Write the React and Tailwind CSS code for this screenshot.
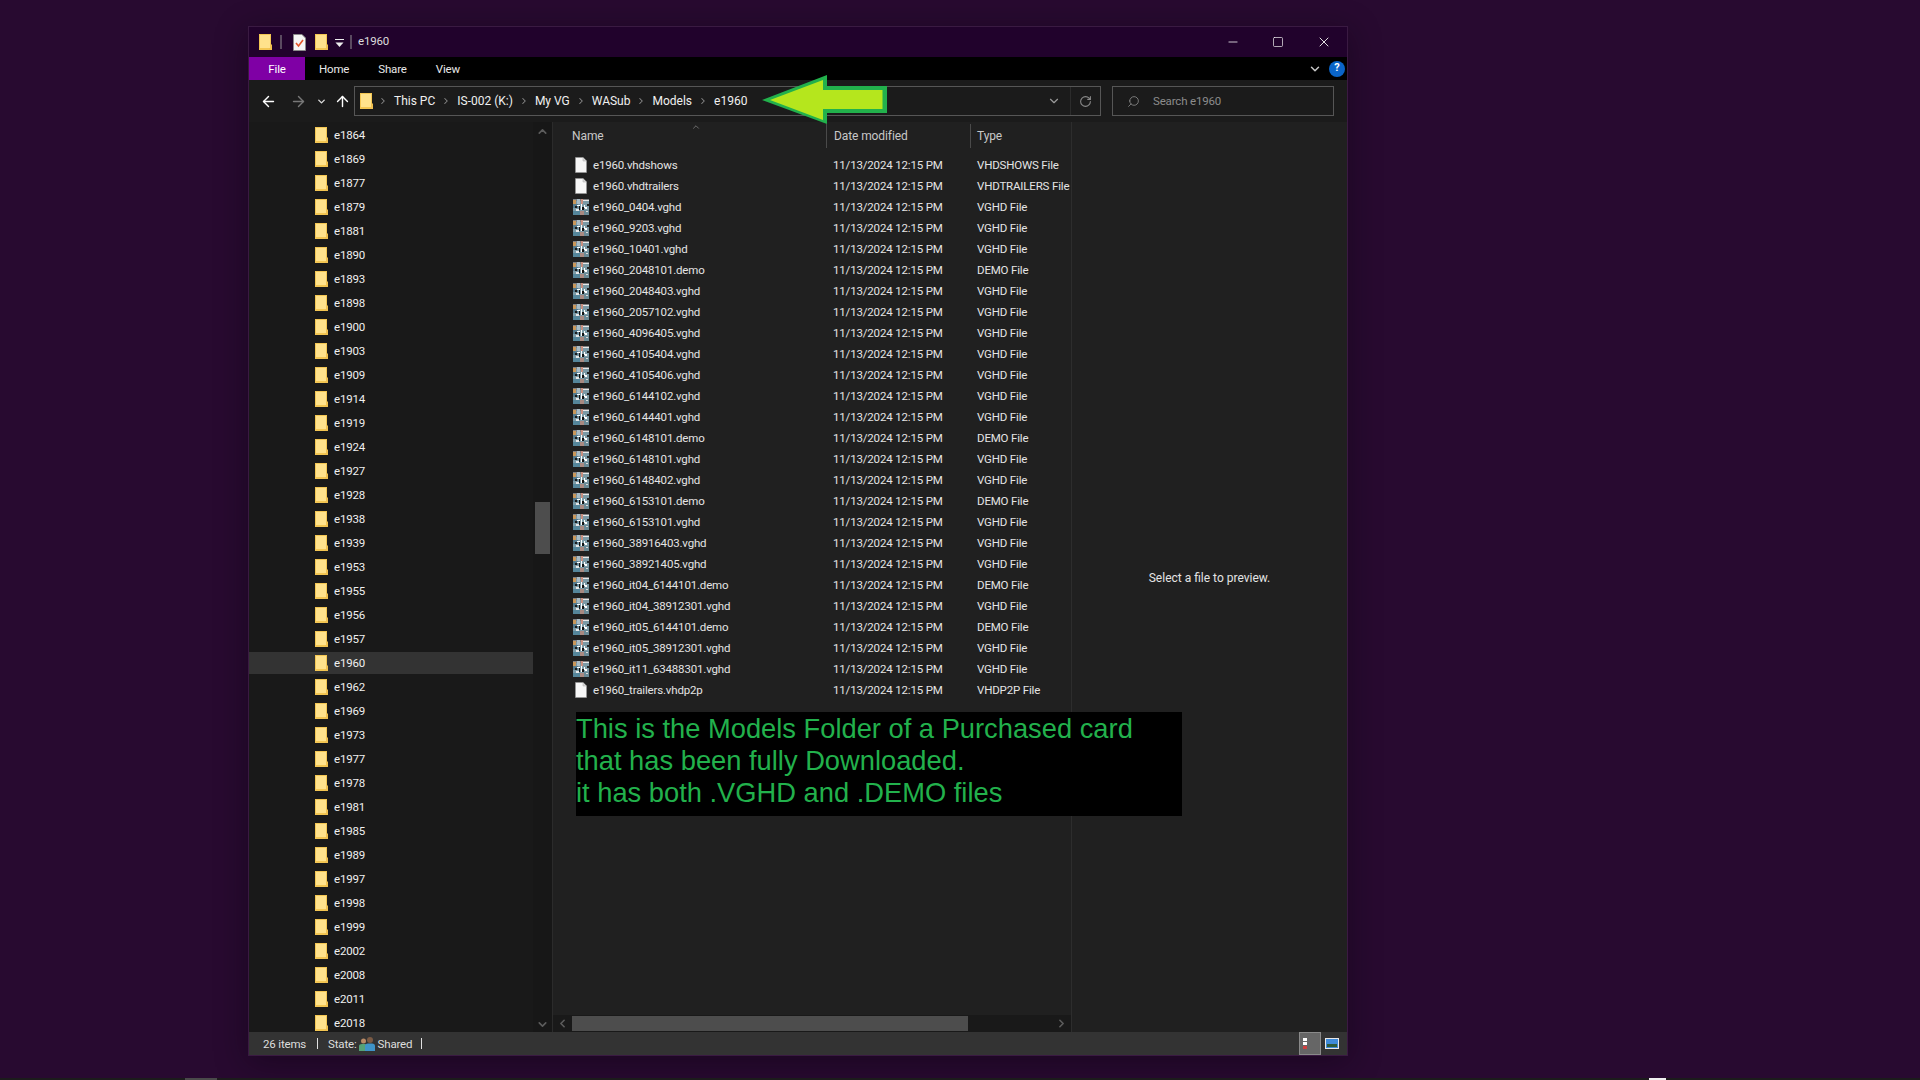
import React from "react";
import { ArrowLeft, ArrowRight, ArrowUp, ChevronDown, ChevronUp, ChevronLeft, ChevronRight, RotateCw, Search, Minus, Square, X } from "lucide-react";

const TREE = "e1864 e1869 e1877 e1879 e1881 e1890 e1893 e1898 e1900 e1903 e1909 e1914 e1919 e1924 e1927 e1928 e1938 e1939 e1953 e1955 e1956 e1957 e1960 e1962 e1969 e1973 e1977 e1978 e1981 e1985 e1989 e1997 e1998 e1999 e2002 e2008 e2011 e2018".split(" ");

const FILES = [
  ["e1960.vhdshows", "VHDSHOWS File", 0],
  ["e1960.vhdtrailers", "VHDTRAILERS File", 0],
  ["e1960_0404.vghd", "VGHD File", 1],
  ["e1960_9203.vghd", "VGHD File", 1],
  ["e1960_10401.vghd", "VGHD File", 1],
  ["e1960_2048101.demo", "DEMO File", 1],
  ["e1960_2048403.vghd", "VGHD File", 1],
  ["e1960_2057102.vghd", "VGHD File", 1],
  ["e1960_4096405.vghd", "VGHD File", 1],
  ["e1960_4105404.vghd", "VGHD File", 1],
  ["e1960_4105406.vghd", "VGHD File", 1],
  ["e1960_6144102.vghd", "VGHD File", 1],
  ["e1960_6144401.vghd", "VGHD File", 1],
  ["e1960_6148101.demo", "DEMO File", 1],
  ["e1960_6148101.vghd", "VGHD File", 1],
  ["e1960_6148402.vghd", "VGHD File", 1],
  ["e1960_6153101.demo", "DEMO File", 1],
  ["e1960_6153101.vghd", "VGHD File", 1],
  ["e1960_38916403.vghd", "VGHD File", 1],
  ["e1960_38921405.vghd", "VGHD File", 1],
  ["e1960_it04_6144101.demo", "DEMO File", 1],
  ["e1960_it04_38912301.vghd", "VGHD File", 1],
  ["e1960_it05_6144101.demo", "DEMO File", 1],
  ["e1960_it05_38912301.vghd", "VGHD File", 1],
  ["e1960_it11_63488301.vghd", "VGHD File", 1],
  ["e1960_trailers.vhdp2p", "VHDP2P File", 0],
];

function Folder({ className = "" }) {
  return (
    <svg width="13" height="16" viewBox="0 0 13 16" className={className}>
      <path d="M0 0H12V10L13 11V16H0Z" fill="#f3c653" />
      <path d="M1 1H11V11L11.5 12V14H1Z" fill="#ffe28c" />
      <path d="M11 11H13V16H10V14H11Z" fill="#f0c050" />
    </svg>
  );
}

function FileIcon() {
  return (
    <svg width="16" height="16" viewBox="0 0 16 16" className="shrink-0">
      <path d="M2.500 0.500H10L13.500 4V15.500H2.500Z" fill="#f7f7f7" stroke="#9a9a9a" strokeWidth="0.6" />
      <path d="M10 0.500V4H13.500" fill="#d8d8d8" stroke="#b5b5b5" strokeWidth="0.6" />
    </svg>
  );
}

function Thumb() {
  return (
    <svg width="16" height="16" viewBox="0 0 16 16" className="shrink-0" shapeRendering="crispEdges">
      <rect width="16" height="16" fill="#7c9aa6" />
      <rect x="0" y="0" width="16" height="2" fill="#7d7f82" />
      <rect x="0" y="1" width="3" height="4" fill="#c9975a" />
      <rect x="4" y="0" width="3" height="5" fill="#a9bcc6" />
      <rect x="8" y="0" width="2" height="5" fill="#c88f80" />
      <rect x="10" y="1" width="6" height="1" fill="#e8e8e8" />
      <rect x="0" y="5" width="5" height="4" fill="#53798c" />
      <rect x="2" y="7" width="2" height="2" fill="#1c1c1c" />
      <rect x="4" y="6" width="3" height="1" fill="#ffffff" />
      <rect x="6" y="7" width="1" height="4" fill="#111111" />
      <rect x="8" y="5" width="1" height="6" fill="#ffffff" />
      <rect x="9" y="8" width="2" height="3" fill="#141414" />
      <rect x="11" y="6" width="1" height="3" fill="#ffffff" />
      <rect x="12" y="8" width="2" height="2" fill="#ffffff" />
      <rect x="14" y="5" width="2" height="2" fill="#202020" />
      <rect x="3" y="10" width="3" height="2" fill="#e8e8e8" />
      <rect x="0" y="12" width="7" height="4" fill="#55869b" />
      <rect x="7" y="12" width="4" height="4" fill="#a98a82" />
      <rect x="11" y="11" width="5" height="5" fill="#6a8a96" />
      <rect x="13" y="12" width="2" height="1" fill="#d9d9d9" />
    </svg>
  );
}

function Crumb({ children }) {
  return (
    <div className="flex items-center">
      <ChevronRight size={10} strokeWidth={2.5} className="text-[#8a8a8a] shrink-0" />
      <span className="text-[#f0f0f0] text-[12px] tracking-normal whitespace-nowrap px-[6px]">{children}</span>
    </div>
  );
}

export default function App() {
  return (
    <div className="relative w-[1920px] h-[1080px] overflow-hidden bg-[#280a30] text-[11.5px] tracking-[-0.17px] text-[#ececec] font-['Roboto','Liberation_Sans',sans-serif]">
      <div className="pt-[26px] pl-[248px]">
        <div className="w-[1100px] h-[1030px] flex flex-col border border-[#3a1a42] shadow-[0_6px_30px_rgba(10,0,15,0.45)]">
          {/* title bar */}
          <div className="h-[30px] shrink-0 bg-[#21022c] flex items-center">
            <Folder className="ml-[10px]" />
            <div className="ml-[8px] w-[2px] h-[14px] bg-[#5a4a60]" />
            <svg width="13" height="17" viewBox="0 0 13 17" className="ml-[11px]">
              <path d="M0.500 0.500H9L12.500 4V16.500H0.500Z" fill="#f5f5f5" stroke="#8a8a8a" />
              <path d="M3 9L5.500 12L10 6" fill="none" stroke="#e2562a" strokeWidth="1.6" />
            </svg>
            <Folder className="ml-[9px]" />
            <svg width="9" height="9" viewBox="0 0 9 9" className="ml-[7px] mt-[2px]">
              <rect x="0" y="0" width="9" height="1" fill="#eee" />
              <path d="M0.500 3.500H8.500L4.500 8Z" fill="#eee" />
            </svg>
            <div className="ml-[6px] w-[2px] h-[14px] bg-[#5a4a60]" />
            <span className="ml-[6px] text-[#ddd]">e1960</span>
            <div className="ml-auto flex items-center text-[#f0f0f0]">
              <div className="w-[46px] flex justify-center pl-[2px]"><Minus size={14} strokeWidth={1.4} /></div>
              <div className="w-[46px] flex justify-center"><Square size={12} strokeWidth={1.4} /></div>
              <div className="w-[46px] flex justify-center"><X size={16} strokeWidth={1.4} /></div>
            </div>
          </div>
          {/* ribbon tabs */}
          <div className="h-[23px] shrink-0 bg-black flex items-center">
            <div className="w-[56px] h-full pt-[2px] bg-[#7f00a5] text-white flex items-center justify-center">File</div>
            <span className="ml-[14px] pt-[2px] text-[#e8e8e8]">Home</span>
            <span className="ml-[29px] pt-[2px] text-[#e8e8e8]">Share</span>
            <span className="ml-[29px] pt-[2px] text-[#e8e8e8]">View</span>
            <ChevronDown size={14} strokeWidth={2.5} className="ml-auto text-[#c8c8c8]" />
            <div className="ml-[7px] mr-[2px] w-[16px] h-[16px] rounded-full bg-[#0a64c8] text-white text-[11px] font-bold flex items-center justify-center">?</div>
          </div>
          {/* nav */}
          <div className="h-[42px] shrink-0 bg-[#1b1b1b] flex items-center">
            <ArrowLeft size={17} strokeWidth={2} className="ml-[11px] text-white" />
            <ArrowRight size={17} strokeWidth={2} className="ml-[13px] text-[#777]" />
            <ChevronDown size={11} strokeWidth={3} className="ml-[9px] text-[#ddd]" />
            <ArrowUp size={17} strokeWidth={2} className="ml-[7px] text-white" />
            <div className="ml-[3px] w-[747px] h-[30px] border border-[#565656] flex items-center">
              <Folder className="ml-[5px] shrink-0" />
              <div className="ml-[5px] flex items-center">
                <Crumb>This PC</Crumb>
                <Crumb>IS-002 (K:)</Crumb>
                <Crumb>My VG</Crumb>
                <Crumb>WASub</Crumb>
                <Crumb>Models</Crumb>
                <Crumb>e1960</Crumb>
              </div>
              <ChevronDown size={14} strokeWidth={2} className="ml-auto mr-[9px] text-[#9a9a9a]" />
              <div className="w-px h-full bg-[#2c2c2c]" />
              <RotateCw size={13} strokeWidth={2} className="mx-[8px] text-[#8a8a8a]" />
            </div>
            <div className="ml-[11px] w-[222px] h-[30px] border border-[#565656] flex items-center text-[#8c8c8c]">
              <Search size={13} strokeWidth={1.5} className="ml-[14px] -scale-x-100 text-[#8c8c8c]" />
              <span className="ml-[13px] pt-px">Search e1960</span>
            </div>
          </div>
          {/* body */}
          <div className="flex-1 min-h-0 flex">
            {/* tree */}
            <div className="w-[304px] shrink-0 bg-[#191919] flex border-r border-[#2b2b2b]">
              <div className="w-[284px] shrink-0 overflow-hidden pt-px">
                {TREE.map((t) => (
                  <div key={t} className="h-[24px] flex items-center">
                    <div className={t === "e1960" ? "w-full h-[22px] bg-[#333333] flex items-center" : "w-full h-[22px] flex items-center"}>
                      <Folder className="ml-[66px] shrink-0" />
                      <span className="ml-[6px] pt-px text-[#f0f0f0]">{t}</span>
                    </div>
                  </div>
                ))}
              </div>
              <div className="flex-1 flex flex-col items-center bg-[#171717]">
                <ChevronUp size={13} strokeWidth={3} className="mt-[3px] text-[#5c5c5c]" />
                <div className="mt-[364px] w-[15px] h-[52px] bg-[#4d4d4d]" />
                <ChevronDown size={13} strokeWidth={3} className="mt-auto mb-[1px] text-[#5c5c5c]" />
              </div>
            </div>
            {/* list */}
            <div className="w-[519px] shrink-0 bg-[#202020] flex flex-col border-r border-[#2d2d2d]">
              <div className="h-[26px] shrink-0 flex items-stretch text-[12px] tracking-[-0.1px] text-[#c8c8c8] relative pt-[2px]">
                <div className="w-[274px] pl-[19px] flex items-center border-r border-[#4a4a4a]">Name</div>
                <div className="w-[144px] pl-[7px] flex items-center border-r border-[#4a4a4a]">Date modified</div>
                <div className="pl-[6px] flex items-center">Type</div>
                <ChevronUp size={10} strokeWidth={1.5} className="absolute left-[138px] top-0 text-[#999]" />
              </div>
              <div className="pt-[6px]">
                {FILES.map(([name, type, thumb]) => (
                  <div key={name} className="h-[21px] flex items-center text-[#e4e4e4]">
                    <div className="ml-[20px] w-[16px] shrink-0">{thumb ? <Thumb /> : <FileIcon />}</div>
                    <span className="ml-[4px] pt-[2px] w-[236px] shrink-0 whitespace-nowrap">{name}</span>
                    <span className="ml-[4px] pt-[2px] w-[144px] shrink-0 whitespace-nowrap">11/13/2024 12:15 PM</span>
                    <span className="pt-[2px] whitespace-nowrap">{type}</span>
                  </div>
                ))}
              </div>
              <div className="relative z-10 mt-[12px] ml-[23px] w-[606px] h-[104px] pt-px bg-black text-[#22b14c] text-[27.3px] tracking-normal leading-[32px] font-['Liberation_Sans',Arial,sans-serif] whitespace-nowrap">
                This is the Models Folder of a Purchased card<br />
                that has been fully Downloaded.<br />
                it has both .VGHD and .DEMO files
              </div>
              <div className="mt-auto h-[17px] shrink-0 bg-[#191919] flex items-center text-[#5c5c5c]">
                <ChevronLeft size={13} strokeWidth={3} className="ml-[3px]" />
                <div className="ml-[3px] w-[396px] h-[15px] bg-[#4d4d4d]" />
                <ChevronRight size={13} strokeWidth={3} className="ml-auto mr-[3px]" />
              </div>
            </div>
            {/* preview */}
            <div className="flex-1 bg-[#202020] flex items-center justify-center text-[12px] tracking-normal text-[#e4e4e4] pt-[2px]">Select a file to preview.</div>
          </div>
          {/* status bar */}
          <div className="h-[23px] shrink-0 bg-[#333333] flex items-center text-[#dedede] pt-[2px]">
            <span className="ml-[14px]">26 items</span>
            <div className="ml-[11px] -mt-[2px] w-px h-[11px] bg-[#e0e0e0]" />
            <span className="ml-[10px]">State:</span>
            <svg width="16" height="16" viewBox="0 0 16 16" className="ml-[2px] -mt-[2px]">
              <circle cx="4.500" cy="5" r="2.500" fill="#b98a64" />
              <path d="M0 15V10Q0 8 3 8H6Q8 8 8 10V15Z" fill="#55a277" />
              <circle cx="11" cy="4" r="3" fill="#7a5a44" />
              <path d="M6 15V10Q6 7.500 9 7.500H13Q16 7.500 16 10V15Z" fill="#3f94c8" />
            </svg>
            <span className="ml-[3px]">Shared</span>
            <div className="ml-[9px] -mt-[2px] w-px h-[11px] bg-[#e0e0e0]" />
            <div className="ml-auto -mt-[2px] h-[23px] w-[22px] bg-[#666666] border border-[#8a8a8a] flex flex-col justify-center gap-[1px] pl-[3px]">
              <div className="w-[4px] h-[3px] bg-white" />
              <div className="w-[4px] h-[3px] bg-white" />
              <div className="w-[4px] h-[3px] bg-[#d04040]" />
            </div>
            <svg width="14" height="11" viewBox="0 0 14 11" className="ml-[4px] mr-[8px] -mt-[2px]">
              <rect x="0.500" y="0.500" width="13" height="10" fill="#3f8ad8" stroke="#e8e8e8" />
              <rect x="2" y="6" width="10" height="3" fill="#2e5a3a" />
            </svg>
          </div>
        </div>
      </div>
      {/* annotation arrow */}
      <svg width="135" height="60" viewBox="0 0 135 60" className="absolute left-[755px] top-[70px]">
        <path d="M7 30L72 5V16H132V43H72V54Z" fill="#22b14c" />
        <path d="M15 30L68 10V20H127.500V39H68V50Z" fill="#b5e61d" />
      </svg>
      {/* screen bottom strip */}
      <div className="absolute left-0 right-0 bottom-0 h-[2px] bg-[#1c1c1c]">
        <div className="absolute left-[185px] w-[32px] h-full bg-[#4a4a4a]" />
        <div className="absolute left-[1649px] w-[17px] h-full bg-[#f0f0f0]" />
      </div>
    </div>
  );
}
